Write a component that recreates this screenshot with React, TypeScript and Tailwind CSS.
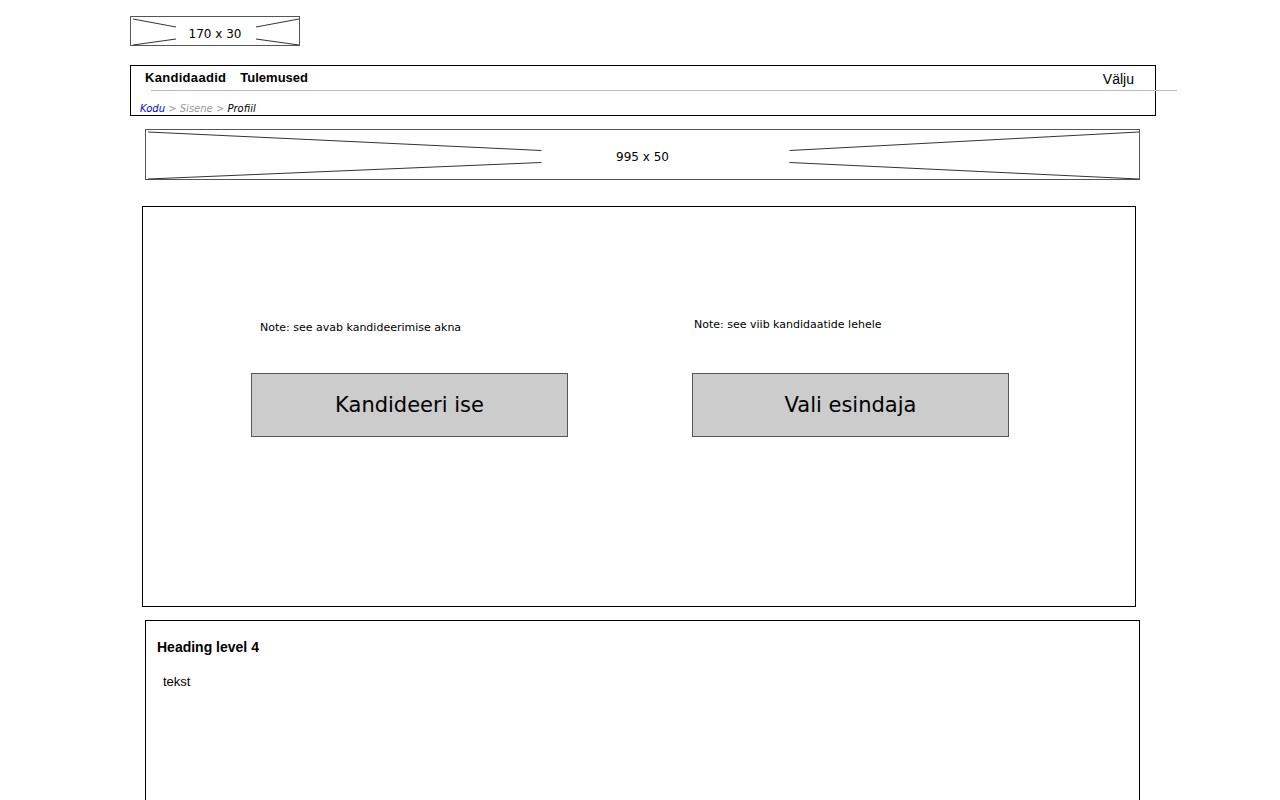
import React from "react";

const comic = { fontFamily: '"Comic Sans MS", "DejaVu Sans", "Open Sans", sans-serif' };

function Placeholder({ w, h, label, gapL, gapR, dy }: { w: number; h: number; label: string; gapL: number; gapR: number; dy: number }) {
  const cx = w / 2;
  const cy = h / 2 + 1;
  return (
    <div className="relative flex items-center justify-center border border-[#555] bg-white" style={{ width: w, height: h }}>
      <svg className="absolute inset-0" width={w} height={h}>
        <line x1={2} y1={2} x2={cx - gapL} y2={cy - dy} stroke="#333" strokeWidth={1} />
        <line x1={2} y1={h - 2} x2={cx - gapL} y2={cy + dy} stroke="#333" strokeWidth={1} />
        <line x1={w - 2} y1={2} x2={cx + gapR} y2={cy - dy} stroke="#333" strokeWidth={1} />
        <line x1={w - 2} y1={h - 2} x2={cx + gapR} y2={cy + dy} stroke="#333" strokeWidth={1} />
      </svg>
      <span className="relative pt-[5px] text-[12px] text-black" style={{ fontFamily: '"DejaVu Sans", sans-serif' }}>{label}</span>
    </div>
  );
}

function Action({ note, label, noteTop }: { note: string; label: string; noteTop: string }) {
  return (
    <div className="flex flex-col">
      <div className={`${noteTop} text-[11px]`} style={comic}>{note}</div>
      <div className="flex h-[64px] w-[317px] items-center justify-center border border-[#555] bg-[#cccccc] pt-[2px] text-[21px]" style={comic}>{label}</div>
    </div>
  );
}

export default function App() {
  return (
    <div className="min-h-[800px] w-[1280px] overflow-hidden bg-white text-black" style={{ fontFamily: '"Liberation Sans", Arial, sans-serif' }}>
      <div className="pl-[130px] pt-[16px]">
        <Placeholder w={170} h={30} label="170 x 30" gapL={40} gapR={40} dy={6} />
      </div>
      <div className="relative ml-[130px] mt-[19px] flex h-[51px] w-[1026px] flex-col border border-black">
        <div className="flex items-start justify-between pl-[14px] pr-[21px] pt-[2px]">
          <div className="flex gap-[14px] text-[13px] font-bold">
            <span className="tracking-[0.3px]">Kandidaadid</span>
            <span>Tulemused</span>
          </div>
          <span className="pt-[1px] text-[14px]">Välju</span>
        </div>
        <div className="absolute left-[20px] top-[24px] h-px w-[1026px] bg-[#bbb]" />
        <div className="mt-auto pl-[9px] text-[10px] italic leading-[13px]" style={comic}>
          <span className="text-[#0000ff]">Kodu</span>
          <span className="text-[#999]"> &gt; Sisene &gt;</span>
          <span> Profiil</span>
        </div>
      </div>
      <div className="ml-[145px] mt-[13px]">
        <Placeholder w={995} h={51} label="995 x 50" gapL={102} gapR={146} dy={6} />
      </div>
      <div className="ml-[142px] mt-[26px] h-[401px] w-[994px] border border-black pl-[108px] pt-[110px]">
        <div className="flex gap-[124px]">
          <Action note="Note: see avab kandideerimise akna" label="Kandideeri ise" noteTop="pl-[9px] pt-[3px] h-[56px]" />
          <Action note="Note: see viib kandidaatide lehele" label="Vali esindaja" noteTop="pl-[2px] h-[56px]" />
        </div>
      </div>
      <div className="ml-[145px] mt-[13px] h-[200px] w-[995px] border border-black pl-[11px] pt-[16px]">
        <div className="text-[14px] font-bold">Heading level 4</div>
        <div className="ml-[6px] mt-[14px] text-[13px]">tekst</div>
      </div>
    </div>
  );
}
